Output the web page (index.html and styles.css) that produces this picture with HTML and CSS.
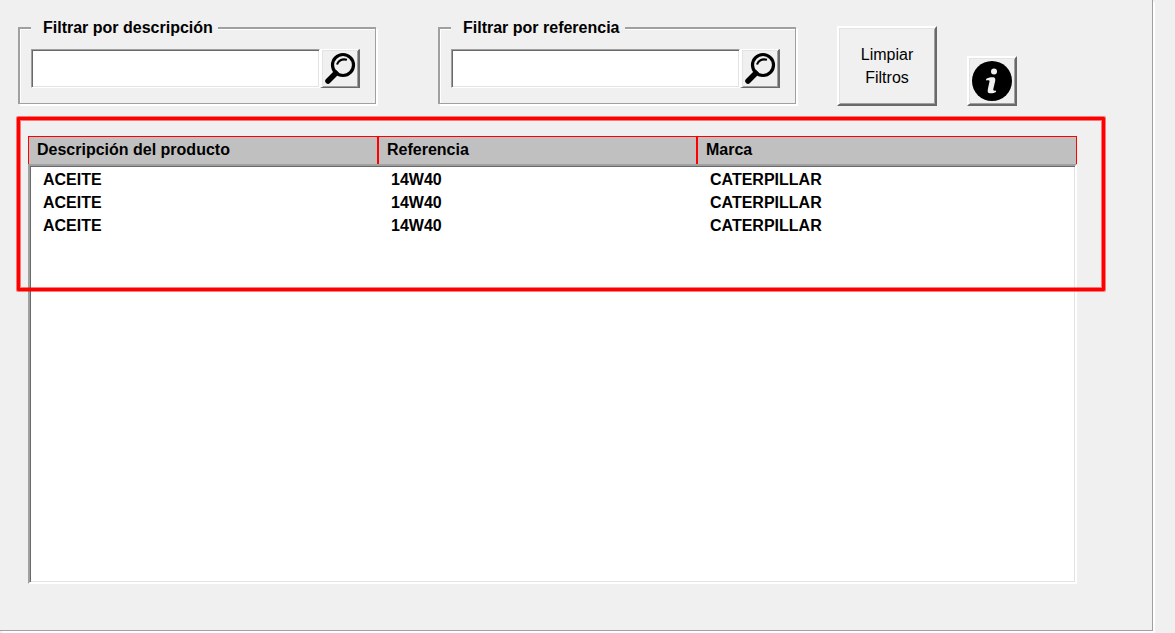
FILE: index.html
```html
<!DOCTYPE html>
<html lang="es">
<head>
<meta charset="utf-8">
<title>Productos</title>
<link rel="stylesheet" href="styles.css">
</head>
<body>
<main class="panel">
  <form class="filters">
    <fieldset class="filter">
      <legend><label for="descripcion">Filtrar por descripción</label></legend>
      <div class="search">
        <input class="field" id="descripcion" type="text">
        <button class="btn btn-search" type="button" aria-label="Buscar por descripción">
          <svg viewBox="0 0 34 34" width="34" height="34" aria-hidden="true">
            <path d="M5 29 12.500 21.500" stroke="#000" stroke-width="5.500" stroke-linecap="round"/>
            <path d="M11 23 14.500 19.500" stroke="#000" stroke-width="4"/>
            <circle cx="20" cy="13" r="10.500" fill="none" stroke="#000" stroke-width="3.200"/>
            <path d="M14 12.500C15 8.500 19 6.500 24 7.800" fill="none" stroke="#000" stroke-width="2.200"/>
          </svg>
        </button>
      </div>
    </fieldset>
    <fieldset class="filter">
      <legend><label for="referencia">Filtrar por referencia</label></legend>
      <div class="search">
        <input class="field" id="referencia" type="text">
        <button class="btn btn-search" type="button" aria-label="Buscar por referencia">
          <svg viewBox="0 0 34 34" width="34" height="34" aria-hidden="true">
            <path d="M5 29 12.500 21.500" stroke="#000" stroke-width="5.500" stroke-linecap="round"/>
            <path d="M11 23 14.500 19.500" stroke="#000" stroke-width="4"/>
            <circle cx="20" cy="13" r="10.500" fill="none" stroke="#000" stroke-width="3.200"/>
            <path d="M14 12.500C15 8.500 19 6.500 24 7.800" fill="none" stroke="#000" stroke-width="2.200"/>
          </svg>
        </button>
      </div>
    </fieldset>
    <div class="actions">
      <button class="btn btn-clear" type="reset">Limpiar<br>Filtros</button>
      <button class="btn btn-info" type="button" aria-label="Información">
        <svg viewBox="0 0 40 40" width="40" height="40" aria-hidden="true">
          <circle cx="20" cy="20" r="20"/>
          <circle cx="22" cy="10.500" r="3" fill="#f0f0f0"/>
          <path d="M14 18C16 16.300 19 16 21.500 16.200 23.300 16.400 23.500 18 23.200 20L21.300 28C21 29.700 22 30 24 29.500L24 31C21.500 32.500 18 32.700 16.300 31.700 15.300 31 15.800 28.500 16.100 27L17.500 20.500C17.700 19 16.500 18.900 14.300 19.500Z" fill="#f0f0f0"/>
        </svg>
      </button>
    </div>
  </form>

  <div class="results">
    <table class="list">
      <thead>
        <tr><th scope="col">Descripción del producto</th><th scope="col">Referencia</th><th scope="col">Marca</th></tr>
      </thead>
      <tbody>
        <tr><td>ACEITE</td><td>14W40</td><td>CATERPILLAR</td></tr>
        <tr><td>ACEITE</td><td>14W40</td><td>CATERPILLAR</td></tr>
        <tr><td>ACEITE</td><td>14W40</td><td>CATERPILLAR</td></tr>
      </tbody>
    </table>
    <div class="highlight"></div>
  </div>
</main>
</body>
</html>
```
FILE: styles.css
```css
* { box-sizing: border-box; }

body {
  margin: 0;
  min-height: 100vh;
  display: flex;
  background: #f0f0f0;
  color: #000;
  font: 16px/23px "Liberation Sans", Arial, sans-serif;
}

.panel {
  flex: 1;
  display: flex;
  flex-direction: column;
  margin: 0 22px 2px 0;
  padding: 16px 75px 46px 18px;
  border: solid #a0a0a0;
  border-width: 0 1px 1px 0;
  box-shadow: 2px 2px #fff;
}

.filters {
  display: flex;
  align-items: flex-end;
}

.filter {
  flex: 0 1 358px;
  min-width: 0;
  margin: 0 62px 2px 0;
  padding: 10px 15px 15px 11px;
  border: solid #a0a0a0;
  border-width: 2px 1px 1px 2px;
  box-shadow: inset 1px 1px #fff, 2px 2px #fff;
}

.filter + .filter { margin-right: 41px; }

.filter legend {
  padding: 0 5px 0 12px;
  background: #f0f0f0;
  font-weight: bold;
}

.search { display: flex; }

.field {
  flex: 1;
  min-width: 0;
  height: 39px;
  padding: 2px 6px;
  border: solid;
  border-width: 1px;
  border-color: #a0a0a0 #fff #fff #a0a0a0;
  border-radius: 0;
  background: #fff;
  box-shadow: inset 1px 1px #696969, inset -1px -1px #e3e3e3;
  font: inherit;
}

.btn {
  display: flex;
  align-items: center;
  justify-content: center;
  padding: 0;
  border: 2px solid;
  border-color: #fff #696969 #696969 #fff;
  border-radius: 0;
  background: #f0f0f0;
  box-shadow: inset 1px 1px #e3e3e3, inset -1px -1px #a0a0a0;
  color: #000;
  font: inherit;
}

.btn svg { display: block; }

.btn-search {
  width: 40px;
  height: 39px;
  border-width: 1px 2px 1px 2px;
}

.actions {
  display: flex;
  align-items: flex-end;
  gap: 30px;
}

.btn-clear {
  width: 100px;
  height: 80px;
}

.btn-info {
  width: 50px;
  height: 50px;
}

.results {
  position: relative;
  flex: 1;
  display: flex;
  margin: 30px 0 0 10px;
}

.list {
  flex: 1;
  display: flex;
  flex-direction: column;
  font-weight: bold;
}

.list thead,
.list tbody { display: block; }

.list tr { display: grid; }

.list thead tr {
  grid-template-columns: 349fr 319fr 381fr;
  border-top: 1px solid #f00;
  background: #c0c0c0;
}

.list th {
  padding: 1px 8px 3px;
  border-left: 2px solid #f00;
  text-align: left;
}

.list th:first-child { border-left-width: 1px; }
.list th:last-child { border-right: 1px solid #f00; }

.list tbody {
  flex: 1;
  padding: 2px 1px;
  border: 2px solid;
  border-color: #a0a0a0 #fff #fff #a0a0a0;
  background: #fff;
  box-shadow: inset 1px 1px #696969, inset -1px -1px #e3e3e3;
}

.list tbody tr { grid-template-columns: 348fr 319fr 376fr; }

.list td { padding: 0 12px; }

/* Red frame drawn over the header and the first rows */
.highlight {
  position: absolute;
  top: -19px;
  left: -11px;
  right: -28px;
  height: 174px;
  border: 3px solid #f00;
  border-radius: 1px;
  box-shadow: 0 0 0 1px rgba(255, 0, 0, 0.5), inset 0 0 0 1px rgba(255, 0, 0, 0.5);
  pointer-events: none;
}
```
